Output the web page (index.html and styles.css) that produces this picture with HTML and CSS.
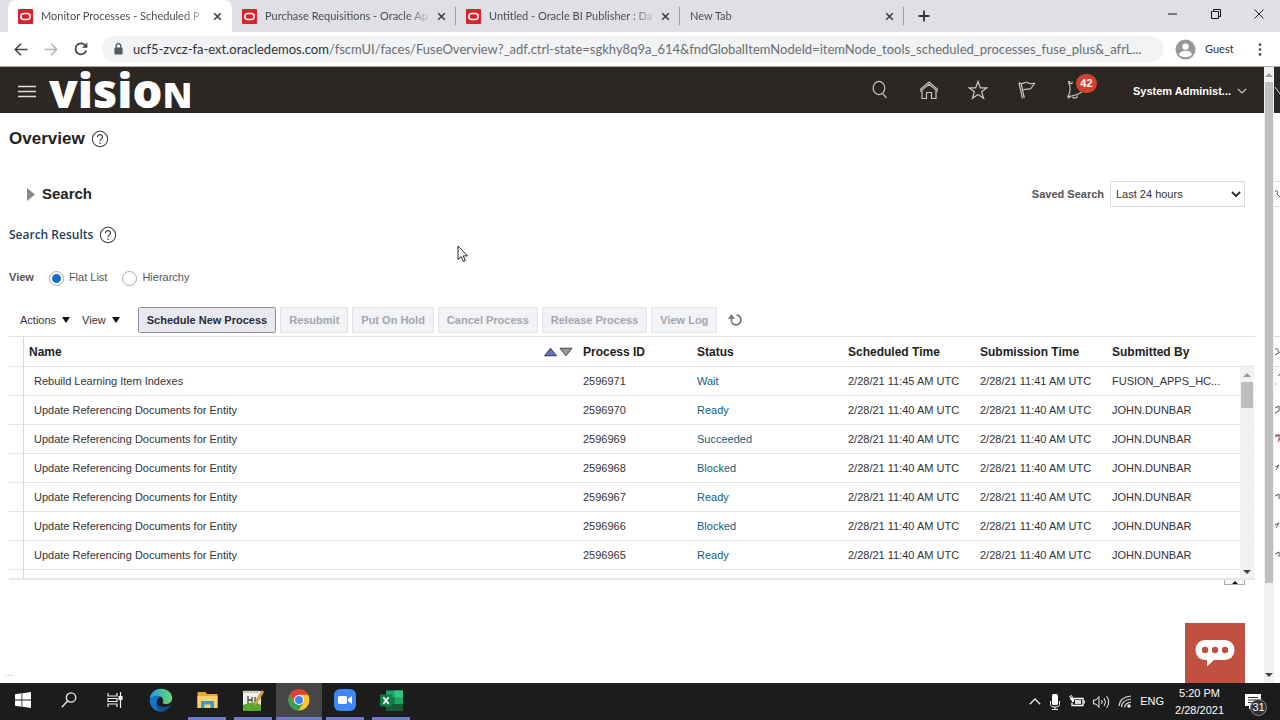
FILE: index.html
```html
<!DOCTYPE html>
<html lang="en">
<head>
<meta charset="utf-8">
<title>Monitor Processes - Scheduled Processes</title>
<link rel="stylesheet" href="styles.css">
</head>
<body>
<svg class="defs" aria-hidden="true">
  <symbol id="oracle" viewBox="0 0 15 15"><rect width="15" height="15" rx="1" fill="#d9232b"/><rect x="2.8" y="4.6" width="9.4" height="6" rx="3" fill="none" stroke="#fff" stroke-width="1.5"/></symbol>
  <symbol id="x" viewBox="0 0 9 9"><path d="M1.2 1.2l6.6 6.6M7.8 1.2L1.2 7.8" stroke="#3c4043" stroke-width="1.6"/></symbol>
  <symbol id="help" viewBox="0 0 18 18"><circle cx="9" cy="9" r="7.7" fill="none" stroke="#444" stroke-width="1.1"/><path d="M6.5 7.2C6.5 3.8 11.6 3.9 11.5 7c0 1.8-2.4 2-2.4 4.1" fill="none" stroke="#444" stroke-width="1.2"/><circle cx="9.1" cy="13.1" r=".85" fill="#444"/></symbol>
</svg>

<div class="tabs">
  <div class="tab active"><svg class="fav"><use href="#oracle"/></svg><span class="title">Monitor Processes - Scheduled P</span><button class="close" aria-label="Close tab"><svg><use href="#x"/></svg></button></div>
  <div class="tab"><svg class="fav"><use href="#oracle"/></svg><span class="title">Purchase Requisitions - Oracle Ap</span><button class="close" aria-label="Close tab"><svg><use href="#x"/></svg></button></div>
  <div class="tab"><svg class="fav"><use href="#oracle"/></svg><span class="title">Untitled - Oracle BI Publisher : Da</span><button class="close" aria-label="Close tab"><svg><use href="#x"/></svg></button></div>
  <div class="tab"><span class="title">New Tab</span><button class="close" aria-label="Close tab"><svg><use href="#x"/></svg></button></div>
  <button class="newtab" aria-label="New tab"><svg width="12" height="12" viewBox="0 0 12 12"><path d="M6 .5v11M.5 6h11" stroke="#333" stroke-width="1.8"/></svg></button>
  <div class="winctl">
    <button aria-label="Minimize"><svg width="10" height="10" viewBox="0 0 10 10"><path d="M0 5h9" stroke="#111"/></svg></button>
    <button aria-label="Restore"><svg width="10" height="10" viewBox="0 0 10 10" fill="none" stroke="#111"><path d="M.5 2.5h7v7h-7zM2.5 2.5v-2h7v7h-2"/></svg></button>
    <button aria-label="Close window"><svg width="10" height="10" viewBox="0 0 10 10"><path d="M.5.5l9 9M9.5.5l-9 9" stroke="#222"/></svg></button>
  </div>
</div>

<div class="bar">
  <button class="nav" aria-label="Back"><svg width="14" height="13" viewBox="0 0 14 13" fill="none" stroke="#444" stroke-width="1.6"><path d="M13.5 6.5H1.5M7 .8L1.3 6.5 7 12.2"/></svg></button>
  <button class="nav" aria-label="Forward"><svg width="14" height="13" viewBox="0 0 14 13" fill="none" stroke="#b4b6b8" stroke-width="1.6"><path d="M.5 6.5h12M7 .8l5.7 5.7L7 12.2"/></svg></button>
  <button class="nav" aria-label="Reload"><svg width="14" height="14" viewBox="0 0 14 14"><path d="M12.2 8.6A5.5 5.5 0 1 1 11 3.1" fill="none" stroke="#444" stroke-width="1.8"/><path d="M13.4.4v5.4H8z" fill="#444"/></svg></button>
  <div class="omni">
    <svg width="9" height="12" viewBox="0 0 9 12"><rect x=".4" y="4.5" width="8.2" height="7" rx="1" fill="#555a5e"/><path d="M2.2 5V3a2.3 2.3 0 0 1 4.6 0v2" fill="none" stroke="#555a5e" stroke-width="1.3"/></svg>
    <span class="url"><b>ucf5-zvcz-fa-ext.oracledemos.com</b>/fscmUI/faces/FuseOverview?_adf.ctrl-state=sgkhy8q9a_614&amp;fndGlobalItemNodeId=itemNode_tools_scheduled_processes_fuse_plus&amp;_afrL...</span>
  </div>
  <button class="guest"><svg width="21" height="21" viewBox="0 0 21 21"><circle cx="10.5" cy="10.5" r="10" fill="#96999c"/><circle cx="10.5" cy="7.6" r="3.2" fill="#fff"/><path d="M4 15.6c1.2-5 11.8-5 13 0-3 3.6-10 3.6-13 0z" fill="#fff"/></svg>Guest</button>
  <button class="dots" aria-label="Menu"><svg width="4" height="13" viewBox="0 0 4 13" fill="#444"><circle cx="2" cy="1.6" r="1.3"/><circle cx="2" cy="6.5" r="1.3"/><circle cx="2" cy="11.4" r="1.3"/></svg></button>
</div>

<div class="view">
  <div class="page">
    <header>
      <button class="burger" aria-label="Navigator"><svg width="18" height="13" viewBox="0 0 18 13"><path d="M0 1.5h18M0 6.5h18M0 11.5h18" stroke="#ddd" stroke-width="1.4"/></svg></button>
      <a class="logo" href="#">visio<span>N</span></a>
      <nav>
        <button aria-label="Search"><svg width="20" height="20" viewBox="0 0 20 20" fill="none" stroke="#c9c4bf" stroke-width="1.2"><ellipse cx="9" cy="8" rx="5.8" ry="6.6"/><path d="M12.5 13.3l4 4.7"/></svg></button>
        <button aria-label="Home"><svg width="20" height="20" viewBox="0 0 20 20" fill="none" stroke="#c9c4bf" stroke-width="1.2"><path d="M1 9.6L10 2l9 7.6M1.2 11.4L10 4.2l8.8 7.2M3 10.5v8h4.5v-6h5v6H17v-8"/></svg></button>
        <button aria-label="Favorites"><svg width="20" height="20" viewBox="0 0 20 20" fill="none" stroke="#c9c4bf" stroke-width="1.2"><path d="M10 1.5l2.3 6.3h6.5l-5.2 4 2 6.4L10 14.4l-5.6 3.8 2-6.4-5.2-4h6.5z"/></svg></button>
        <button aria-label="Watchlist"><svg width="20" height="20" viewBox="0 0 20 20" fill="none" stroke="#c9c4bf" stroke-width="1.2"><path d="M5.5 18.5L2 3M7.3 18L4.2 4.2M2 2.5c4 3.5 6-2 9 .2 2 1.5 4 1.3 7 .3-3 2.5-2.5 6-6 6.2-2.5.2-3.5-1-6.5 1.3"/></svg></button>
        <button class="bell" aria-label="Notifications"><svg width="20" height="20" viewBox="0 0 20 20" fill="none" stroke="#c9c4bf" stroke-width="1.2"><path d="M2 1.5h1.5v2H6v-2M2.5 2c2.5 5 2 10-.5 14.5l4-.7c4-.8 8.5-2.500 11.500-5.500M6.500 17c1.500 1.800 5 1.200 5-1.500M2 18.200l3.500-2.500"/></svg><span class="badge">42</span></button>
      </nav>
      <button class="user">System Administ...<svg width="10" height="6" viewBox="0 0 10 6"><path d="M.8.8L5 5 9.2.8" fill="none" stroke="#ccc" stroke-width="1.2"/></svg></button>
    </header>

    <main>
      <h1>Overview <svg class="help"><use href="#help"/></svg></h1>
      <div class="search">
        <button class="disclose"><svg width="8" height="13" viewBox="0 0 8 13"><path d="M0 0l8 6.5L0 13z" fill="#888"/></svg>Search</button>
        <label class="saved" for="saved">Saved Search</label>
        <select id="saved"><option>Last 24 hours</option></select>
      </div>
      <h2>Search Results <svg class="help"><use href="#help"/></svg></h2>
      <div class="radios" role="radiogroup" aria-label="View">
        <span class="lead">View</span>
        <label><input type="radio" name="v" checked>Flat List</label>
        <label><input type="radio" name="v">Hierarchy</label>
      </div>
      <div class="tools">
        <button class="menu">Actions<i></i></button>
        <button class="menu">View<i></i></button>
        <button class="btn primary">Schedule New Process</button>
        <button class="btn" disabled>Resubmit</button>
        <button class="btn" disabled>Put On Hold</button>
        <button class="btn" disabled>Cancel Process</button>
        <button class="btn" disabled>Release Process</button>
        <button class="btn" disabled>View Log</button>
        <button class="refresh" aria-label="Refresh"><svg width="16" height="14" viewBox="0 0 16 14"><path d="M9.5 1.9A5 5 0 1 1 4.7 9.5" fill="none" stroke="#777" stroke-width="1.8"/><path d="M4.500 9V4.500" fill="none" stroke="#777" stroke-width="1.6"/><path d="M.8 5.800L4.500 1.300 8.200 5.800z" fill="#777"/></svg></button>
      </div>
      <div class="grid">
        <table>
          <colgroup><col class="c0"><col><col class="c2"><col class="c3"><col class="c4"><col class="c4"><col class="c6"></colgroup>
          <thead><tr><th></th><th><span class="namehead">Name<svg width="30" height="10" viewBox="0 0 30 10"><path d="M1.5 8.8h12L7.5 1.2z" fill="#6272b8" stroke="#333a58"/><path d="M17 1.2h12L23 8.8z" fill="#999" stroke="#444"/></svg></span></th><th>Process ID</th><th>Status</th><th>Scheduled Time</th><th>Submission Time</th><th>Submitted By</th></tr></thead>
          <tbody>
            <tr><td></td><td>Rebuild Learning Item Indexes</td><td>2596971</td><td><a href="#">Wait</a></td><td>2/28/21 11:45 AM UTC</td><td>2/28/21 11:41 AM UTC</td><td>FUSION_APPS_HC...</td></tr>
            <tr><td></td><td>Update Referencing Documents for Entity</td><td>2596970</td><td><a href="#">Ready</a></td><td>2/28/21 11:40 AM UTC</td><td>2/28/21 11:40 AM UTC</td><td>JOHN.DUNBAR</td></tr>
            <tr><td></td><td>Update Referencing Documents for Entity</td><td>2596969</td><td><a href="#">Succeeded</a></td><td>2/28/21 11:40 AM UTC</td><td>2/28/21 11:40 AM UTC</td><td>JOHN.DUNBAR</td></tr>
            <tr><td></td><td>Update Referencing Documents for Entity</td><td>2596968</td><td><a href="#">Blocked</a></td><td>2/28/21 11:40 AM UTC</td><td>2/28/21 11:40 AM UTC</td><td>JOHN.DUNBAR</td></tr>
            <tr><td></td><td>Update Referencing Documents for Entity</td><td>2596967</td><td><a href="#">Ready</a></td><td>2/28/21 11:40 AM UTC</td><td>2/28/21 11:40 AM UTC</td><td>JOHN.DUNBAR</td></tr>
            <tr><td></td><td>Update Referencing Documents for Entity</td><td>2596966</td><td><a href="#">Blocked</a></td><td>2/28/21 11:40 AM UTC</td><td>2/28/21 11:40 AM UTC</td><td>JOHN.DUNBAR</td></tr>
            <tr><td></td><td>Update Referencing Documents for Entity</td><td>2596965</td><td><a href="#">Ready</a></td><td>2/28/21 11:40 AM UTC</td><td>2/28/21 11:40 AM UTC</td><td>JOHN.DUNBAR</td></tr>
            <tr class="stub"><td></td><td></td><td></td><td></td><td></td><td></td><td></td></tr>
          </tbody>
        </table>
        <div class="gridbar"><span class="up"></span><span class="thumb"></span><span class="down"></span></div>
      </div>
      <button class="collapse" aria-label="Collapse panel"><i></i></button>
      <span class="status">...</span>
    </main>
    <button class="chat" aria-label="Chat"><svg width="40" height="28" viewBox="0 0 40 28"><rect x=".5" y="1" width="39" height="20" rx="9.5" fill="#fff"/><path d="M12 19v8.5L20 20z" fill="#fff"/><g fill="#c05040"><circle cx="10" cy="11" r="3.2"/><circle cx="20" cy="11" r="3.2"/><circle cx="30" cy="11" r="3.2"/></g></svg></button>
  </div>
  <div class="pagebar"><span class="up"></span><span class="thumb"></span><span class="down"></span></div>
  <svg class="edge" viewBox="0 0 6 616" width="6" height="616"><rect width="6" height="46" fill="#2d2724"/><path d="M0 114.5h6M0 139.5h6M0 269.5h6M0 299.5h6" stroke="#ddd"/><g fill="none" stroke="#555"><path d="M1 20l5 7" stroke="#ddd"/><path d="M1 124q4-1 2 3l3 3M1 282q4-1 3 3M1 288l5-3M1 317h1M4 309l2-2M1 341l4-2v5l-4 2M1 370l4-2v5" /><path d="M1 368h5M4 375l2-3" stroke="#b23"/><path d="M1 400l4-2-3 5M1 429l4-2v5M1 458l4-2-3 5M1 487l4-2v5"/></g></svg>
</div>

<footer>
  <button aria-label="Start"><svg width="16" height="16" viewBox="0 0 16 16" fill="#fff"><path d="M0 2.3L6.5 1.3v6.3H0zM7.3 1.2L16 0v7.6H7.3zM0 8.4h6.5v6.3L0 13.7zM7.3 8.4H16V16l-8.7-1.2z"/></svg></button>
  <button aria-label="Search"><svg width="16" height="16" viewBox="0 0 16 16" fill="none" stroke="#eee" stroke-width="1.3"><circle cx="10" cy="5.5" r="4.7"/><path d="M6.6 9L.8 15.2"/></svg></button>
  <button aria-label="Task view"><svg width="16" height="16" viewBox="0 0 16 16" fill="none" stroke="#eee" stroke-width="1.2"><path d="M1 1v3h9V1M1 15v-3h9v3M1 6.500h9v3H1zM13.500 0v16"/><path d="M12 4.500h3v3h-3z" fill="#eee"/></svg></button>
  <button aria-label="Edge"><svg width="24" height="24" viewBox="0 0 24 24"><defs><linearGradient id="e1" x1="0" x2="1"><stop offset="0" stop-color="#1aa0e8"/><stop offset="1" stop-color="#6bd86b"/></linearGradient></defs><path d="M.8 11C1.5 4 6.5.8 12 .8c7 0 11.2 4.7 11.2 9.3 0 4-3 6-6.3 6-2.4 0-3.9-.9-2.9-2.3C15 11 12.5 8 9 8c-3 0-6 1-8.2 3z" fill="url(#e1)"/><path d="M.7 12C3 7.5 9 6.700 12 9c-3 .5-5 3.500-4 7 1 3.700 5 6.500 9 6.500-8 3.500-16.500-2-16.300-10.500z" fill="#1673c8"/><path d="M8 13c-.5 5 6 8 13.800 4.300C20 20.500 17 23 13.500 23 8.500 22.500 5.500 17 8 13z" fill="#124c94"/></svg></button>
  <button class="open" aria-label="File Explorer"><svg width="21" height="18" viewBox="0 0 21 18"><path d="M.5 1h8l1.500 2h10.500v14H.5z" fill="#e8a92e"/><path d="M.5 5h20v12H.5z" fill="#fbd36a"/><path d="M4 17v-7h13v7h-3.500v-3.500h-6V17z" fill="#3d97d4"/></svg></button>
  <button class="open" aria-label="Notepad++"><svg width="22" height="23" viewBox="0 0 22 23"><path d="M1 2h18v20H1z" fill="#eef0e8"/><path d="M1 16q9-5 18 0v6H1z" fill="#58a82c"/><path d="M3 1v3M6 1v3M9 1v3M12 1v3M15 1v3" stroke="#888"/><path d="M6 7v7M6 11h4M10 8v5M13 8v5" stroke="#444" stroke-width="1.3"/><path d="M20 1l2 2-8 13-2 1 .5-3z" fill="#e4b23a" stroke="#8a6020" stroke-width=".5"/></svg></button>
  <button class="open current" aria-label="Chrome"><svg width="22" height="22" viewBox="0 0 22 22"><circle cx="11" cy="11" r="10.5" fill="#fbc531"/><path d="M1.8 5.8A10.5 10.5 0 0 1 20.2 5.8H11L6.5 13.6z" fill="#e44134"/><path d="M1.8 5.8A10.5 10.5 0 0 0 10.5 21.5L15.5 13.6H6.5z" fill="#34a34f"/><circle cx="11" cy="11" r="5" fill="#fff"/><circle cx="11" cy="11" r="4" fill="#4285f4"/></svg></button>
  <button class="open" aria-label="Zoom"><svg width="22" height="22" viewBox="0 0 22 22"><rect width="22" height="22" rx="6" fill="#3f87f5"/><rect x="4" y="7" width="9" height="8" rx="1.5" fill="#fff"/><path d="M14 10l4-3v8l-4-3z" fill="#fff"/></svg></button>
  <button class="open" aria-label="Excel"><svg width="23" height="21" viewBox="0 0 23 21"><path d="M6 .5h17v20H6z" fill="#21a366"/><path d="M14.5.5H23v7h-8.5z" fill="#33c481"/><path d="M6 7h8.5v7H6z" fill="#107c41"/><path d="M6 14h17v6.5H6z" fill="#185c37"/><rect y="4.5" width="12" height="12" rx="1" fill="#107c41"/><path d="M3.3 7.3l5.4 6.6M8.7 7.3l-5.4 6.6" stroke="#fff" stroke-width="1.7"/></svg></button>
  <div class="tray">
    <svg width="12" height="7" viewBox="0 0 12 7"><path d="M.8 6.2L6 1l5.2 5.2" fill="none" stroke="#eee" stroke-width="1.3"/></svg>
    <svg width="12" height="16" viewBox="0 0 12 16"><rect x="3" width="6" height="11" rx="1.5" fill="#fff"/><path d="M1.5 7v3.5q0 2.5 4.5 2.5t4.5-2.5V7M6 13v2.5M3 15.5h6" fill="none" stroke="#fff"/></svg>
    <svg width="16" height="13" viewBox="0 0 16 13"><path d="M5 3.5h9v7H3v-3" fill="none" stroke="#fff" stroke-width="1.3"/><path d="M6 5h6v4H6zM14.5 5.5H16v3h-1.5z" fill="#ddd"/><path d="M1 3l3 4 1-3zM0 1l3 2M2 0l2 3" fill="#fff" stroke="#fff"/></svg>
    <svg width="17" height="14" viewBox="0 0 17 14" fill="none" stroke="#eee"><path d="M.5 5h2.5l3-3.5v11L3 9H.5zM8.5 5q1.5 2 0 4M11 3q3 4 0 8M13.5 1q4.5 6 0 12"/></svg>
    <svg width="14" height="13" viewBox="0 0 14 13" fill="none" stroke="#ddd" stroke-width="1.2"><path d="M1 11Q2 2 13 1M3.5 12Q4 5 13 4M6.5 12.5Q7 8 13 7"/><circle cx="11" cy="11" r="1.2" fill="#fff"/></svg>
    <span class="lang">ENG</span>
    <div class="clock"><span>5:20 PM</span><span>2/28/2021</span></div>
    <button class="note" aria-label="Notifications"><svg width="17" height="16" viewBox="0 0 17 16"><path d="M0 0h16v12H8l-4 3.5V12H0z" fill="#fff"/><path d="M3 3.5h10M3 6h10M3 8.5h6" stroke="#333"/></svg><span>31</span></button>
  </div>
</footer>
<svg class="cursor" width="12" height="18" viewBox="0 0 12 18"><path d="M1 1v13.5l3.2-2.9 2.2 5 2-1-2.2-4.7h4.3z" fill="#fff" stroke="#222"/></svg>
</body>
</html>
```
FILE: styles.css
```css
* { box-sizing: border-box; }
body { margin: 0; height: 100vh; display: flex; flex-direction: column; overflow: hidden; background: #fff; font: 11px/16px "Liberation Sans", Arial, sans-serif; color: #333; }
button { border: 0; background: none; padding: 0; margin: 0; font: inherit; color: inherit; display: flex; align-items: center; justify-content: center; white-space: nowrap; }
a { text-decoration: none; color: #145c7c; }
svg { flex: none; display: block; }
.defs { position: absolute; width: 0; height: 0; }

.tabs { display: flex; height: 32px; padding-left: 8px; background: #dee0e5; font: 11px/16px Lato, "Open Sans", sans-serif; color: #4a4d51; }
.tab { display: flex; align-items: center; flex: 0 1 224px; min-width: 0; padding: 0 10px; gap: 8px; position: relative; }
.tab:not(.active)::after { content: ""; position: absolute; right: 0; top: 7px; height: 18px; width: 1px; background: #999ca1; }
.tab.active { background: #fff; border-radius: 8px 8px 0 0; }
.fav { width: 15px; height: 15px; }
.title { flex: 1; min-width: 0; overflow: hidden; white-space: nowrap; mask-image: linear-gradient(to right, #000 142px, transparent 168px); }
.close, .close svg { width: 9px; height: 9px; }
.newtab { width: 40px; }
.winctl { display: flex; margin-left: auto; }
.winctl button { width: 43px; height: 28px; }

.bar { display: flex; align-items: center; height: 35px; padding: 0 8px 0 6px; border-bottom: 1px solid #aaa; background: #fff; font: 13px/20px Lato, "Open Sans", sans-serif; }
.nav { width: 30px; height: 28px; }
.omni { flex: 1; min-width: 0; display: flex; align-items: center; gap: 10px; height: 26px; margin-left: 6px; padding: 0 12px; border-radius: 13px; background: #f1f3f5; color: #6b6e72; }
.url { overflow: hidden; white-space: nowrap; }
.url b { font-weight: 400; color: #303236; }
.guest { gap: 9px; margin-left: 11px; width: 65px; height: 24px; border-radius: 12px; justify-content: flex-start; font-size: 11px; }
.dots { width: 24px; margin-left: 8px; }

.view { flex: 1; min-height: 0; display: flex; }
.page { flex: 1; min-width: 0; position: relative; display: flex; flex-direction: column; }
header { display: flex; align-items: center; height: 46px; padding: 0 17px 0 18px; background: #2d2724; color: #fff; }
.burger { height: 40px; margin-right: 13px; padding-top: 3px; }
.logo { color: #fff; font: 800 47px/46px "Open Sans", "Noto Sans", sans-serif; height: 46px; overflow: hidden; }
.logo span { font-size: 36px; }
nav { display: flex; margin-left: auto; gap: 29px; }
nav button { width: 20px; height: 40px; position: relative; }
.badge { position: absolute; left: 10px; top: 4px; width: 21px; height: 19px; border-radius: 10px; background: #d3402f; color: #fff; font: bold 11px/19px "Liberation Sans", sans-serif; text-align: center; }
.user { margin-left: 47px; gap: 6px; padding-top: 2px; font-weight: bold; }

main { padding: 0 9px; }
h1 { display: flex; align-items: center; gap: 6px; margin: 15px 0 0; font-size: 17px; line-height: 22px; color: #222; }
.help { width: 18px; height: 18px; }
.search { display: flex; align-items: center; margin: 31px 10px 0 18px; height: 26px; }
.disclose { gap: 7px; font-size: 15px; font-weight: bold; color: #222; }
.saved { margin-left: auto; margin-right: 6px; font-weight: bold; color: #555; }
select { width: 135px; height: 26px; border: 1px solid #d9dce0; background: #fff; padding: 0 1px; font: inherit; color: #333; }
h2 { display: flex; align-items: center; gap: 6px; margin: 18px 0 0; font: 600 12px/20px "Open Sans", sans-serif; color: #1b4058; }
.radios { display: flex; align-items: center; margin-top: 23px; height: 18px; }
.lead { margin-right: 15px; font-weight: bold; color: #555; }
.radios label { display: flex; align-items: center; gap: 5px; margin-right: 15px; color: #555; }
.radios input { appearance: none; width: 15px; height: 15px; margin: 2px 0 0; border: 1px solid #aaa; border-radius: 50%; }
.radios input:checked { background: radial-gradient(circle, #1670c8 4px, #fff 5px); }
.tools { display: flex; align-items: center; height: 26px; margin-top: 21px; padding-left: 11px; gap: 4px; }
.menu { gap: 6px; margin-right: 8px; }
.menu i { border: 4px solid transparent; border-top: 6px solid #111; border-bottom: 0; }
.btn { height: 26px; padding: 0 8px; border: 1px solid #e1e3e7; border-radius: 2px; background: #f2f3f6; font-weight: bold; color: #a4a6a9; }
.primary { margin-left: 6px; border-color: #8b909c; background: #e8e9ee; color: #2b2b35; }
.refresh { margin-left: 6px; }

.grid { position: relative; margin-top: 3px; border-top: 1px solid #dfe1e3; border-bottom: 2px solid #e6e7e9; }
table { width: 100%; table-layout: fixed; border-collapse: separate; border-spacing: 0; }
.c0 { width: 15px; }
.c2 { width: 114px; }
.c3 { width: 151px; }
.c4 { width: 132px; }
.c6 { width: 148px; }
th, td { height: 29px; padding: 0 5px; border-bottom: 1px solid #e4e6e8; text-align: left; white-space: nowrap; overflow: hidden; }
th { height: 30px; color: #222; font-size: 12px; }
th:first-child, td:first-child { padding: 0; border-right: 1px solid #d5d8da; }
td:nth-child(2) { padding-left: 10px; }
.namehead { display: flex; align-items: center; justify-content: space-between; }
.stub td { height: 8px; border-bottom: 0; }
.gridbar { position: absolute; right: 1px; top: 30px; bottom: 0; width: 14px; background: #f2f2f3; display: flex; flex-direction: column; align-items: center; padding: 6px 0 4px; }
.up { border: 4px solid transparent; border-bottom: 4px solid #999; border-top: 0; }
.down { margin-top: auto; border: 4px solid transparent; border-top: 4px solid #444; border-bottom: 0; }
.gridbar .thumb { margin-top: 5px; width: 12px; height: 26px; background: #bdbdbe; }
.collapse { width: 21px; height: 5px; margin: 0 10px 0 auto; border: 1px solid #aab; border-top: 0; background: #f5f6f8; }
.collapse i { border: 3px solid transparent; border-bottom: 3px solid #111; border-top: 0; }
.status { display: block; margin: 79px 0 0 -5px; color: #bbb; }
.chat { position: absolute; right: 19px; bottom: 0; width: 60px; height: 60px; background: #c05040; }
.pagebar { width: 10px; display: flex; flex-direction: column; align-items: center; background: #f1f1f2; padding: 6px 0 6px; }
.pagebar .thumb { margin-top: 5px; width: 8px; height: 501px; background: #bfbfc0; }
.edge { overflow: hidden; }

footer { display: flex; height: 37px; background: #1c1c1d; color: #fff; font-size: 11px; line-height: 17px; }
footer > button { width: 46px; border-bottom: 3px solid transparent; }
.open { background: linear-gradient(#7079cc, #7079cc) center bottom / 38px 3px no-repeat border-box; }
.current { background: linear-gradient(#7079cc, #7079cc) center bottom / 100% 3px no-repeat border-box #464648; }
.tray { display: flex; align-items: center; margin-left: auto; gap: 8px; padding-right: 14px; }
.clock { display: flex; flex-direction: column; margin: 0 8px 0 3px; text-align: center; }
.note { position: relative; width: 26px; height: 30px; }
.note span { position: absolute; left: 10px; top: 12px; width: 17px; height: 17px; border: 1px solid #888; border-radius: 50%; background: #333; font-size: 11px; line-height: 15px; text-align: center; }
.cursor { position: absolute; left: 457px; top: 245px; }
```
